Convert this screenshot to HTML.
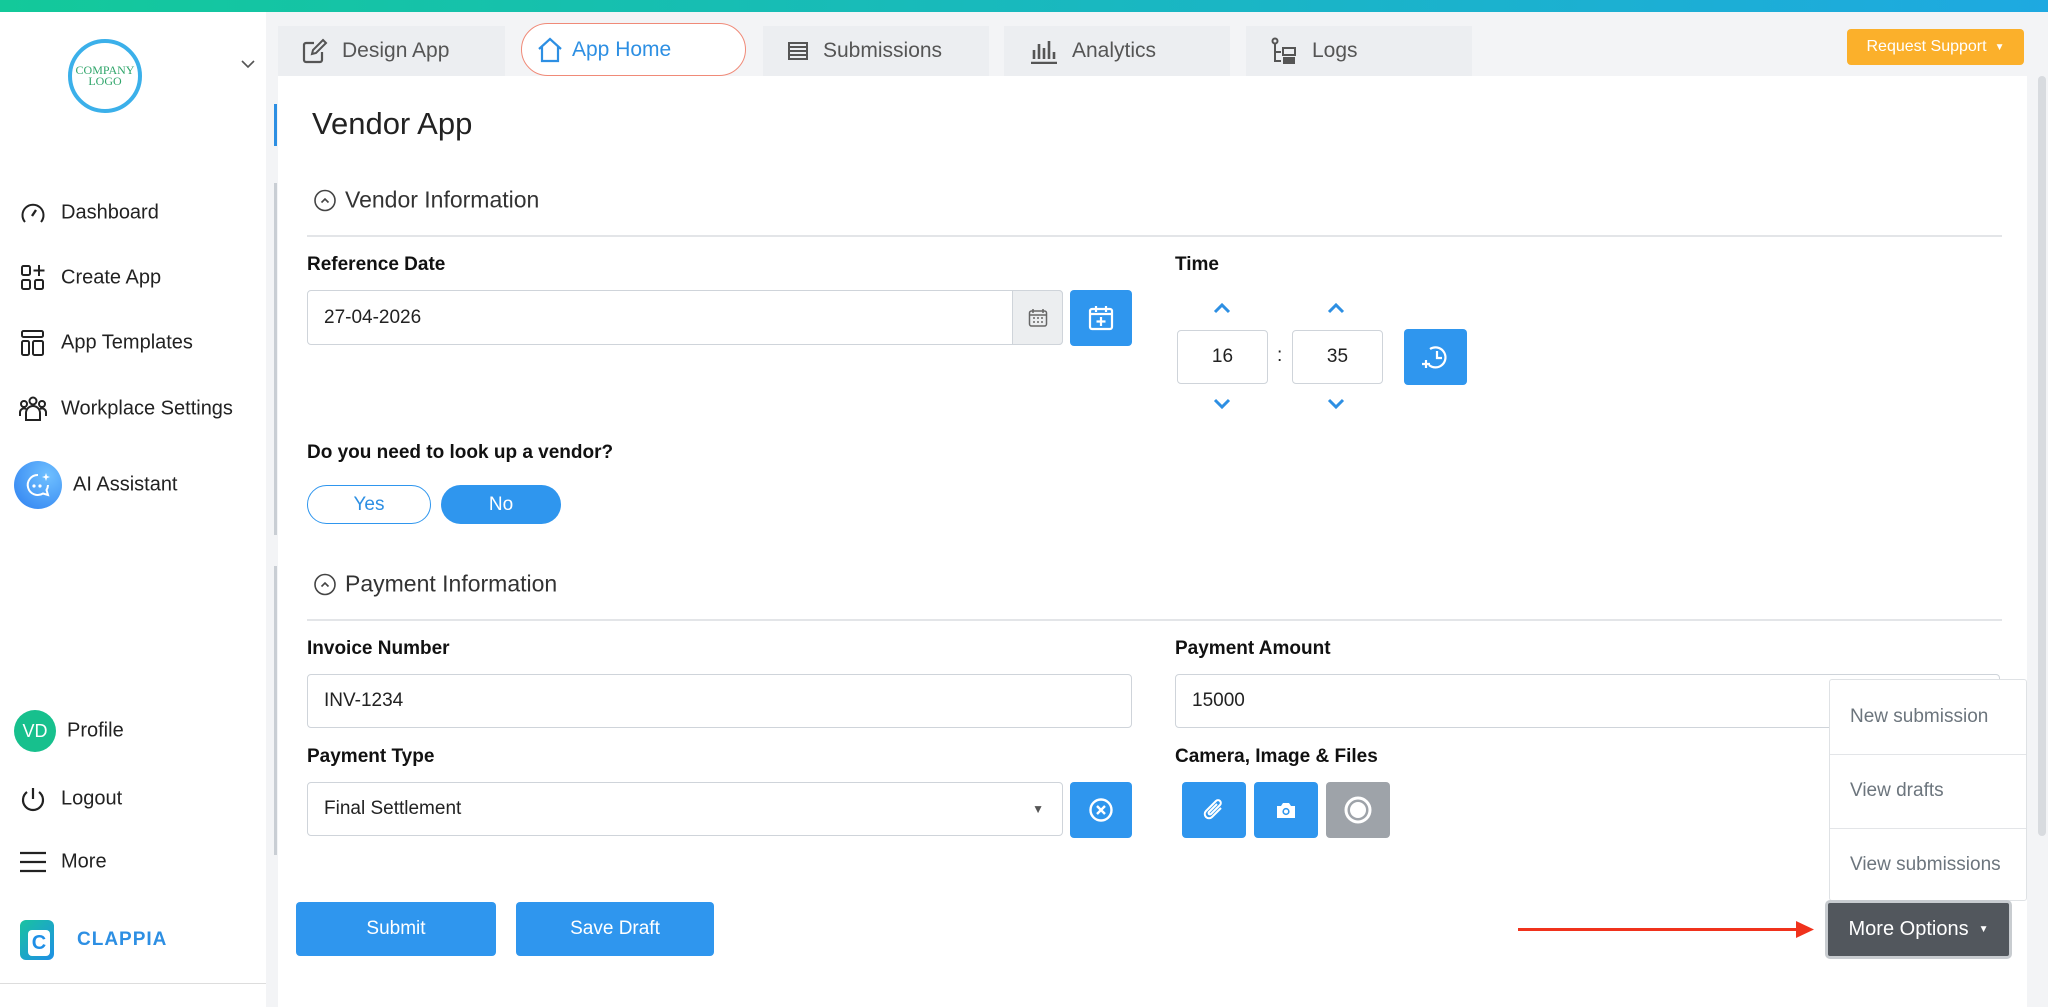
<!DOCTYPE html>
<html><head><meta charset="utf-8"><style>
*{box-sizing:border-box;margin:0;padding:0}
body{width:2048px;height:1007px;overflow:hidden;font-family:"Liberation Sans",sans-serif;background:#f3f4f6;position:relative;color:#222}
.a{position:absolute}
.top{left:0;top:0;width:2048px;height:12px;background:linear-gradient(90deg,#13c99a,#1ea9e1)}
.side{left:0;top:12px;width:266px;height:995px;background:#fff}
.nav{position:absolute;left:61px;font-size:20px;color:#222;transform:translateY(-50%)}
.ic{position:absolute;transform:translate(-50%,-50%)}
.tab{position:absolute;top:26px;height:50px;background:#eceef1;font-size:21px;color:#555;display:flex;align-items:center;padding-left:24px;gap:14px}
.panel{left:278px;top:76px;width:1749px;height:931px;background:#fff}
.lbl{position:absolute;font-size:19px;font-weight:bold;color:#111;transform:translateY(-50%)}
.inp{position:absolute;border:1.5px solid #cfd4da;border-radius:4px;background:#fff;font-size:19px;display:flex;align-items:center;padding-left:16px}
.bb{position:absolute;background:#2f96ee;border-radius:4px;display:flex;align-items:center;justify-content:center}
.sec{position:absolute;font-size:23px;color:#333;transform:translateY(-50%);display:flex;align-items:center;gap:8px}
.hr{position:absolute;left:307px;width:1695px;height:1.5px;background:#e3e5e8}
.btn{position:absolute;background:#2f96ee;color:#fff;font-size:19px;border-radius:4px;display:flex;align-items:center;justify-content:center}
.dd{position:absolute;left:1829px;width:198px;font-size:19px;color:#6c757d;padding-left:21px;transform:translateY(-50%)}
</style></head><body>
<div class="a top"></div>
<div class="a side"></div>
<div class="a panel"></div>
<!-- logo -->
<div class="a" style="left:68px;top:39px;width:74px;height:74px;border-radius:50%;border:4px solid #3bb0ea;display:flex;align-items:center;justify-content:center;font-family:'Liberation Serif',serif;font-size:12px;line-height:11px;color:#2fa56a;text-align:center">COMPANY<br>LOGO</div>
<svg class="a" style="left:241px;top:59px" width="14" height="10" viewBox="0 0 14 10"><path d="M1 2l6 6 6-6" stroke="#555" stroke-width="1.6" fill="none"/></svg>
<!-- nav icons -->
<svg class="ic" style="left:33px;top:213px" width="26" height="26" viewBox="0 0 26 26"><path d="M5 22A10.5 10.5 0 1 1 21 22" stroke="#222" stroke-width="2" fill="none"/><path d="M12 16l4-6" stroke="#222" stroke-width="2.4"/></svg>
<div class="nav" style="top:213px">Dashboard</div>
<svg class="ic" style="left:33px;top:278px" width="26" height="28" viewBox="0 0 26 28"><rect x="2" y="2" width="8" height="9" rx="1.5" stroke="#222" stroke-width="2" fill="none"/><rect x="2" y="16" width="8" height="9" rx="1.5" stroke="#222" stroke-width="2" fill="none"/><rect x="15" y="16" width="8" height="9" rx="1.5" stroke="#222" stroke-width="2" fill="none"/><path d="M19 1v11M13.5 6.5h11" stroke="#222" stroke-width="2"/></svg>
<div class="nav" style="top:278px">Create App</div>
<svg class="ic" style="left:33px;top:343px" width="26" height="28" viewBox="0 0 26 28"><rect x="2" y="2" width="21" height="6" rx="1.5" stroke="#222" stroke-width="2" fill="none"/><rect x="2" y="12" width="7" height="14" rx="1.5" stroke="#222" stroke-width="2" fill="none"/><rect x="13" y="12" width="10" height="14" rx="1.5" stroke="#222" stroke-width="2" fill="none"/></svg>
<div class="nav" style="top:343px">App Templates</div>
<svg class="ic" style="left:33px;top:409px" width="30" height="26" viewBox="0 0 30 26"><circle cx="15" cy="5" r="3.5" stroke="#222" stroke-width="2" fill="none"/><circle cx="6" cy="8" r="3" stroke="#222" stroke-width="2" fill="none"/><circle cx="24" cy="8" r="3" stroke="#222" stroke-width="2" fill="none"/><path d="M8 24v-7a7 7 0 0 1 14 0v7zM2 20v-4a4 4 0 0 1 6-3M28 20v-4a4 4 0 0 0-6-3" stroke="#222" stroke-width="2" fill="none"/></svg>
<div class="nav" style="top:409px">Workplace Settings</div>
<div class="a" style="left:14px;top:461px;width:48px;height:48px;border-radius:50%;background:radial-gradient(circle at 70% 30%,#6fc0ff,#2d7ff0)"></div>
<svg class="ic" style="left:38px;top:485px" width="30" height="30" viewBox="0 0 30 30"><path d="M15 5a10 10 0 1 0 5 18.5l5 1.5-1.5-5A10 10 0 0 0 25 15" stroke="#fff" stroke-width="2" fill="none"/><circle cx="11" cy="16" r="1.6" fill="#fff"/><circle cx="17" cy="16" r="1.6" fill="#fff"/><path d="M23 3l1 3 3 1-3 1-1 3-1-3-3-1 3-1z" fill="#fff"/></svg>
<div class="nav" style="top:485px;left:73px">AI Assistant</div>
<div class="a" style="left:14px;top:710px;width:42px;height:42px;border-radius:50%;background:#17c08d;color:#fff;font-size:18px;display:flex;align-items:center;justify-content:center">VD</div>
<div class="nav" style="top:731px;left:67px">Profile</div>
<svg class="ic" style="left:33px;top:799px" width="28" height="28" viewBox="0 0 28 28"><path d="M14 3v11" stroke="#222" stroke-width="2.2"/><path d="M8 7a10 10 0 1 0 12 0" stroke="#222" stroke-width="2.2" fill="none"/></svg>
<div class="nav" style="top:799px">Logout</div>
<svg class="ic" style="left:33px;top:862px" width="28" height="22" viewBox="0 0 28 22"><path d="M1 2h26M1 11h26M1 20h26" stroke="#222" stroke-width="2.2"/></svg>
<div class="nav" style="top:862px">More</div>
<div class="a" style="left:20px;top:920px;width:34px;height:40px;border-radius:6px;background:linear-gradient(135deg,#19c3a0,#1f8fe6)"></div>
<div class="a" style="left:28px;top:930px;width:22px;height:26px;border-radius:4px;background:#fff;color:#1f8fe6;font-weight:bold;font-size:20px;text-align:center;line-height:26px">C</div>
<div class="nav" style="top:940px;left:77px;font-weight:bold;color:#2d8fe3;font-size:19px;letter-spacing:1px">CLAPPIA</div>
<div class="a" style="left:0;top:983px;width:266px;height:1px;background:#ddd"></div>
<!-- tabs -->
<div class="tab" style="left:278px;width:227px"><svg width="26" height="26" viewBox="0 0 26 26"><path d="M20 14v8a2 2 0 0 1-2 2H4a2 2 0 0 1-2-2V7a2 2 0 0 1 2-2h8" stroke="#555" stroke-width="2.2" fill="none"/><path d="M21 2l3 3-10 10-4 1 1-4z" stroke="#555" stroke-width="2" fill="none"/></svg>Design App</div>
<div class="a" style="left:521px;top:23px;width:225px;height:53px;border:1.5px solid #f08a78;border-radius:27px;background:#fff;display:flex;align-items:center;padding-left:14px;gap:8px;font-size:21px;color:#2d8fe3"><svg width="28" height="28" viewBox="0 0 28 28"><path d="M3 13L14 3l11 10M6 11v14h16V11" stroke="#2d8fe3" stroke-width="2.2" fill="none"/></svg>App Home</div>
<div class="tab" style="left:763px;width:226px"><svg width="22" height="20" viewBox="0 0 22 20"><path d="M2 2h18v16H2zM2 6h18M2 10h18M2 14h18" stroke="#555" stroke-width="2" fill="none"/></svg>Submissions</div>
<div class="tab" style="left:1004px;width:226px"><svg width="30" height="26" viewBox="0 0 30 26"><path d="M3 25h26M6 21V12M11 21V6M16 21V10M21 21V3M26 21V14" stroke="#555" stroke-width="2.6"/></svg>Analytics</div>
<div class="tab" style="left:1246px;width:226px"><svg width="28" height="28" viewBox="0 0 28 28"><circle cx="5" cy="4" r="2.5" stroke="#555" stroke-width="2" fill="none"/><path d="M5 7v17h6M5 15h6" stroke="#555" stroke-width="2" fill="none"/><rect x="13" y="11" width="12" height="7" stroke="#555" stroke-width="2" fill="none"/><rect x="13" y="20" width="12" height="7" fill="#555"/></svg>Logs</div>
<div class="a" style="left:1847px;top:29px;width:177px;height:36px;background:#fbb02b;border-radius:4px;color:#fff;font-size:16px;display:flex;align-items:center;justify-content:center;gap:8px">Request Support <span style="font-size:10px">▼</span></div>
<!-- panel -->
<div class="a" style="left:274px;top:104px;width:3px;height:42px;background:#2d8fe3"></div>
<div class="a" style="left:274px;top:183px;width:3px;height:352px;background:#c9ced4"></div>
<div class="a" style="left:274px;top:566px;width:3px;height:289px;background:#c9ced4"></div>
<div class="a" style="left:2038px;top:76px;width:8px;height:760px;background:#d8dbdf;border-radius:4px"></div>
<div class="a" style="left:312px;top:124px;font-size:31px;color:#222;transform:translateY(-50%)">Vendor App</div>
<div class="sec" style="left:313px;top:200px"><svg width="24" height="24" viewBox="0 0 24 24"><circle cx="12" cy="12" r="10" stroke="#444" stroke-width="1.6" fill="none"/><path d="M8.5 14l3.5-3.5 3.5 3.5" stroke="#444" stroke-width="1.6" fill="none"/></svg>Vendor Information</div>
<div class="hr" style="top:235px"></div>
<div class="lbl" style="left:307px;top:265px">Reference Date</div>
<div class="inp" style="left:307px;top:290px;width:756px;height:55px">27-04-2026</div>
<div class="a" style="left:1012px;top:290px;width:51px;height:55px;background:#eceef0;border:1.5px solid #cfd4da;border-radius:0 4px 4px 0;display:flex;align-items:center;justify-content:center"><svg width="20" height="20" viewBox="0 0 20 20"><rect x="1.5" y="3" width="17" height="15" rx="2" stroke="#666" stroke-width="1.5" fill="none"/><path d="M1.5 7h17M5 1v4M15 1v4" stroke="#666" stroke-width="1.5"/><path d="M5 10h2M9 10h2M13 10h2M5 14h2M9 14h2M13 14h2" stroke="#666" stroke-width="1.5"/></svg></div>
<div class="bb" style="left:1070px;top:290px;width:62px;height:56px"><svg width="26" height="26" viewBox="0 0 26 26"><rect x="2" y="4" width="22" height="20" rx="2" stroke="#fff" stroke-width="2.2" fill="none"/><path d="M2 9h22M8 1v6M18 1v6M13 12v9M8.5 16.5h9" stroke="#fff" stroke-width="2.2"/></svg></div>
<div class="lbl" style="left:1175px;top:265px">Time</div>
<svg class="ic" style="left:1222px;top:308px" width="18" height="12" viewBox="0 0 18 12"><path d="M2 10l7-7 7 7" stroke="#2d8fe3" stroke-width="3" fill="none"/></svg>
<svg class="ic" style="left:1336px;top:308px" width="18" height="12" viewBox="0 0 18 12"><path d="M2 10l7-7 7 7" stroke="#2d8fe3" stroke-width="3" fill="none"/></svg>
<div class="inp" style="left:1177px;top:330px;width:91px;height:54px;justify-content:center;padding:0">16</div>
<div class="a" style="left:1277px;top:345px;font-size:19px">:</div>
<div class="inp" style="left:1292px;top:330px;width:91px;height:54px;justify-content:center;padding:0">35</div>
<div class="bb" style="left:1404px;top:329px;width:63px;height:56px"><svg width="28" height="28" viewBox="0 0 28 28"><path d="M8 6a10 10 0 1 1-1 16" stroke="#fff" stroke-width="2.2" fill="none"/><path d="M15 8v7h5" stroke="#fff" stroke-width="2.2" fill="none"/><path d="M4 17v8M0 21h8" stroke="#fff" stroke-width="2.2"/></svg></div>
<svg class="ic" style="left:1222px;top:404px" width="18" height="12" viewBox="0 0 18 12"><path d="M2 2l7 7 7-7" stroke="#2d8fe3" stroke-width="3" fill="none"/></svg>
<svg class="ic" style="left:1336px;top:404px" width="18" height="12" viewBox="0 0 18 12"><path d="M2 2l7 7 7-7" stroke="#2d8fe3" stroke-width="3" fill="none"/></svg>
<div class="lbl" style="left:307px;top:453px">Do you need to look up a vendor?</div>
<div class="a" style="left:307px;top:485px;width:124px;height:39px;border:1.5px solid #2f96ee;border-radius:20px;color:#2d8fe3;font-size:19px;display:flex;align-items:center;justify-content:center">Yes</div>
<div class="a" style="left:441px;top:485px;width:120px;height:39px;background:#2f96ee;border-radius:20px;color:#fff;font-size:19px;display:flex;align-items:center;justify-content:center">No</div>
<div class="sec" style="left:313px;top:584px"><svg width="24" height="24" viewBox="0 0 24 24"><circle cx="12" cy="12" r="10" stroke="#444" stroke-width="1.6" fill="none"/><path d="M8.5 14l3.5-3.5 3.5 3.5" stroke="#444" stroke-width="1.6" fill="none"/></svg>Payment Information</div>
<div class="hr" style="top:619px"></div>
<div class="lbl" style="left:307px;top:649px">Invoice Number</div>
<div class="inp" style="left:307px;top:674px;width:825px;height:54px">INV-1234</div>
<div class="lbl" style="left:1175px;top:649px">Payment Amount</div>
<div class="inp" style="left:1175px;top:674px;width:825px;height:54px">15000</div>
<div class="lbl" style="left:307px;top:757px">Payment Type</div>
<div class="inp" style="left:307px;top:782px;width:756px;height:54px">Final Settlement<span style="position:absolute;right:18px;font-size:12px;color:#555">▼</span></div>
<div class="bb" style="left:1070px;top:782px;width:62px;height:56px"><svg width="26" height="26" viewBox="0 0 26 26"><circle cx="13" cy="13" r="10.5" stroke="#fff" stroke-width="2.4" fill="none"/><path d="M9 9l8 8M17 9l-8 8" stroke="#fff" stroke-width="2.4"/></svg></div>
<div class="lbl" style="left:1175px;top:757px">Camera, Image &amp; Files</div>
<div class="bb" style="left:1182px;top:782px;width:64px;height:56px"><svg width="26" height="26" viewBox="0 0 26 26"><path d="M20 11l-9 9a4 4 0 0 1-6-6l10-10a2.6 2.6 0 0 1 4 4l-9 9a1.3 1.3 0 0 1-2-2l8-8" stroke="#fff" stroke-width="2" fill="none"/></svg></div>
<div class="bb" style="left:1254px;top:782px;width:64px;height:56px"><svg width="22" height="20" viewBox="0 0 22 20"><path d="M2 6h4l2-3h6l2 3h4v12H2z" fill="#fff"/><circle cx="11" cy="11.5" r="3.6" fill="#2f96ee"/><circle cx="11" cy="11.5" r="2" fill="#fff"/></svg></div>
<div class="bb" style="left:1326px;top:782px;width:64px;height:56px;background:#9ea3a9"><svg width="30" height="30" viewBox="0 0 30 30"><circle cx="15" cy="15" r="12" stroke="#fff" stroke-width="3" fill="none"/><circle cx="15" cy="15" r="8" fill="#fff"/></svg></div>
<div class="btn" style="left:296px;top:902px;width:200px;height:54px">Submit</div>
<div class="btn" style="left:516px;top:902px;width:198px;height:54px">Save Draft</div>
<div class="a" style="left:1829px;top:679px;width:198px;height:222px;background:#fff;border:1.5px solid #dfe2e5;border-radius:3px"></div>
<div class="a" style="left:1830px;top:754px;width:196px;height:1px;background:#e3e5e8"></div>
<div class="a" style="left:1830px;top:828px;width:196px;height:1px;background:#e3e5e8"></div>
<div class="dd" style="top:717px">New submission</div>
<div class="dd" style="top:791px">View drafts</div>
<div class="dd" style="top:865px">View submissions</div>
<div class="a" style="left:1825px;top:900px;width:187px;height:59px;border:3px solid #c8ccd0;border-radius:5px;background:#52575d;color:#fff;font-size:20px;display:flex;align-items:center;justify-content:center;gap:10px">More Options <span style="font-size:10px">▼</span></div>
<div class="a" style="left:1518px;top:928px;width:280px;height:2.5px;background:#f0321c"></div>
<svg class="a" style="left:1796px;top:921px" width="18" height="17" viewBox="0 0 18 17"><path d="M0 0l18 8.5L0 17z" fill="#f0321c"/></svg>
</body></html>
